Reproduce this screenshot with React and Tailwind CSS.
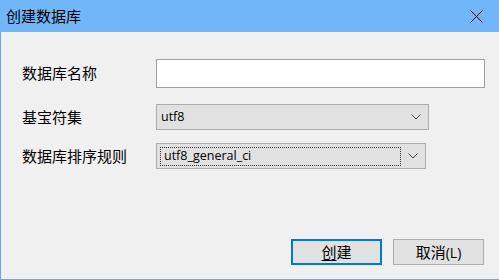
import React from "react";

const cjk = { fontFamily: '"Noto Sans CJK SC", "Noto Sans", sans-serif' };
const latin = { fontFamily: '"Open Sans", "Noto Sans CJK SC", sans-serif' };

const Chevron = () => (
  <svg width="10" height="6" viewBox="0 0 10 6" className="shrink-0">
    <polyline points="0.5,0.5 5,5 9.5,0.5" fill="none" stroke="#444" strokeWidth="1" />
  </svg>
);

const Select = ({ value, width, focused }) => (
  <div className={`flex h-[26px] items-center border border-[#adadad] bg-[#e1e1e1] ${width}`}>
    {focused ? (
      <div className="ml-[3px] flex h-[19px] w-[243px] items-center border border-dotted border-[#333] pl-[3px]">
        <span className="text-[12.5px] text-black" style={latin}>{value}</span>
      </div>
    ) : (
      <div className="flex flex-1 items-center pl-[4px]">
        <span className="text-[12.5px] text-black" style={latin}>{value}</span>
      </div>
    )}
    <div className="ml-auto flex w-[24px] items-center justify-center">
      <Chevron />
    </div>
  </div>
);

export default function App() {
  return (
    <div className="flex h-[280px] w-[499px] flex-col border-b border-l border-[#64a9f1] bg-[#f0f0f0]" style={cjk}>
      {/* title bar */}
      <div className="-ml-px flex h-[32px] shrink-0 items-center justify-between bg-[#71b6f9] pl-[6px] pr-[16px]">
        <span className="text-[15px] text-black">创建数据库</span>
        <svg width="13" height="13" viewBox="0 0 13 13">
          <line x1="0.5" y1="0.5" x2="12.5" y2="12.5" stroke="#000" strokeWidth="1" />
          <line x1="12.5" y1="0.5" x2="0.5" y2="12.5" stroke="#000" strokeWidth="1" />
        </svg>
      </div>

      <div className="grid grid-cols-[134px_1fr] pl-[21px]">
        <div className="mt-[27px] flex h-[29px] items-center text-[15px] text-black">数据库名称</div>
        <div className="mt-[27px] h-[29px]">
          <input className="h-[29px] w-[329px] border border-[#a0a0a0] bg-white px-1 outline-none" />
        </div>

        <div className="mt-[16px] flex h-[26px] items-center text-[15px] text-black">基宝符集</div>
        <div className="mt-[16px]">
          <Select value="utf8" width="w-[273px]" />
        </div>

        <div className="mt-[13px] flex h-[26px] items-center text-[15px] text-black">数据库排序规则</div>
        <div className="mt-[13px]">
          <Select value="utf8_general_ci" width="w-[270px]" focused />
        </div>
      </div>

      <div className="mt-auto mb-[14px] flex justify-end gap-[11px] pr-[15px]">
        <button className="flex h-[26px] w-[91px] items-center justify-center border-2 border-[#0078d7] bg-[#e1e1e1] text-[15px] text-black">
          <span className="underline underline-offset-2">创</span>建
        </button>
        <button className="flex h-[26px] w-[91px] items-center justify-center border border-[#adadad] bg-[#e1e1e1] text-[15px] text-black">
          取消<span className="text-[14px]" style={latin}>(L)</span>
        </button>
      </div>
    </div>
  );
}
